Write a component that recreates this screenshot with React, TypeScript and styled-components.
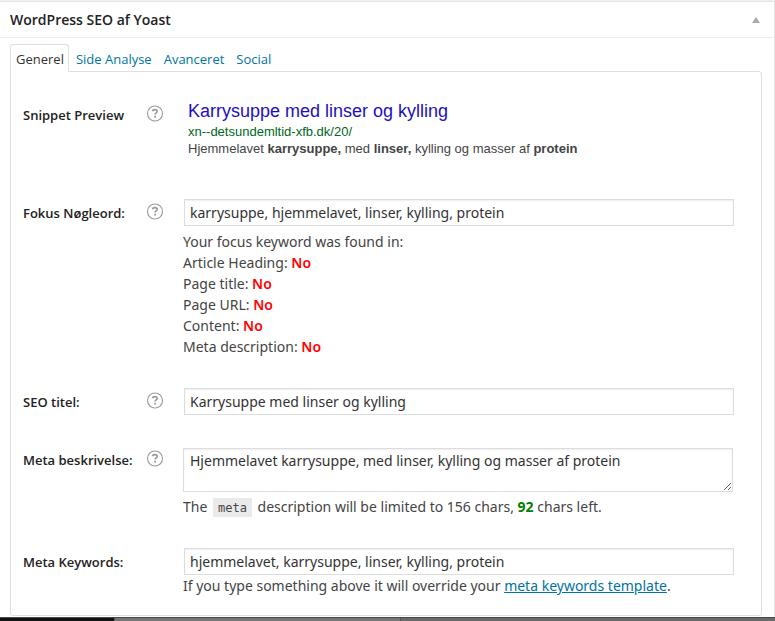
import React from "react";
import styled, { createGlobalStyle } from "styled-components";

const GlobalStyle = createGlobalStyle`
  *, *::before, *::after { box-sizing: border-box; }
  body {
    margin: 0;
    background: #f1f1f1;
    color: #444;
    font: 14px/21px "Noto Sans", "Open Sans", sans-serif;
  }
`;

const Page = styled.div`
  padding-top: 1px;
`;

const Postbox = styled.section`
  background: #fff;
  border-top: 1px solid #e5e5e5;
  border-right: 1px solid #e5e5e5;
`;

const BoxHeader = styled.header`
  display: flex;
  align-items: center;
  justify-content: space-between;
  height: 36px;
  padding: 0 14px 0 10px;
  border-bottom: 1px solid #eee;
`;

const BoxTitle = styled.h3`
  margin: 0;
  font-family: "Open Sans", sans-serif;
  font-size: 14px;
  font-weight: 600;
  line-height: 20px;
  color: #222;
`;

const Toggle = styled.button`
  display: flex;
  padding: 0;
  border: 0;
  background: none;
  color: #aaa;
`;

const Inside = styled.div`
  padding: 6px 12px 1px 10px;
`;

const Tabs = styled.nav`
  display: flex;
  margin-bottom: -1px;
`;

const Tab = styled.a<{ $active?: boolean }>`
  height: 28px;
  margin-right: ${(p) => (p.$active ? 2 : 2)}px;
  padding: ${(p) => (p.$active ? "5px 4px 0 5px" : "6px 5px 0")};
  border: ${(p) => (p.$active ? "1px solid #dfdfdf" : "0")};
  border-bottom: 0;
  border-radius: 3px 3px 0 0;
  background: ${(p) => (p.$active ? "#fff" : "transparent")};
  color: ${(p) => (p.$active ? "#333" : "#0074a2")};
  font-family: "Open Sans", sans-serif;
  font-size: 13px;
  line-height: 19px;
  text-decoration: none;
  z-index: 1;
`;

const Panel = styled.div`
  display: flex;
  flex-direction: column;
  gap: 30px;
  padding: 28px 27px 19px 12px;
  border: 1px solid #dfdfdf;
  border-radius: 0 3px 3px 3px;
`;

const Row = styled.div`
  display: grid;
  grid-template-columns: 123px 37px minmax(0, 1fr);
`;

const Label = styled.label`
  padding-top: 5px;
  color: #222;
  font-family: "Open Sans", sans-serif;
  font-size: 13px;
  font-weight: 600;
  line-height: 20px;
`;

const HelpButton = styled.button`
  display: flex;
  align-self: start;
  margin-top: 5px;
  padding: 0;
  border: 0;
  background: none;
  color: #999;
`;

const Input = styled.input`
  display: block;
  width: calc(100% - 1px);
  height: 27px;
  margin: 1px 0 0 1px;
  padding: 2px 5px;
  border: 1px solid #ddd;
  box-shadow: inset 0 1px 2px rgba(0, 0, 0, 0.07);
  background: #fff;
  color: #333;
  font: inherit;
`;

const TextArea = styled.textarea`
  display: block;
  width: calc(100% - 1px);
  height: 44px;
  margin: 3px 0 4px;
  padding: 1px 6px;
  border: 1px solid #ddd;
  box-shadow: inset 0 1px 2px rgba(0, 0, 0, 0.07);
  background: #fff;
  color: #333;
  font: inherit;
  resize: vertical;
`;

const Results = styled.div`
  margin-top: 5px;
`;

const Note = styled.p`
  margin: 0;
`;

const Status = styled.strong<{ $good?: boolean }>`
  color: ${(p) => (p.$good ? "green" : "red")};
  font-weight: ${(p) => (p.$good ? 700 : 600)};
`;

const Code = styled.code`
  margin: 0 2px;
  padding: 3px 5px 2px;
  background: #eaeaea;
  font: 12px "DejaVu Sans Mono", monospace;
`;

const Link = styled.a`
  color: #0074a2;
`;

const Snippet = styled.div`
  min-height: 68px;
  padding-left: 5px;
  font: 13px/17px "Liberation Sans", Arial, sans-serif;
`;

const SnippetTitle = styled.a`
  display: block;
  color: #1e0fbe;
  font-size: 18px;
  line-height: 23px;
  text-decoration: none;
`;

const SnippetUrl = styled.div`
  color: #006621;
`;

const Footer = styled.footer`
  display: grid;
  grid-template-columns: 115px 286px 1fr;
  height: 4px;
  border-top: 1px solid #4a4848;
`;

const Strip = styled.div<{ $tone: string }>`
  background: ${(p) => p.$tone};
  border-right: 1px solid #555;

  &:last-child {
    border-right: 0;
  }
`;

function Help() {
  return (
    <HelpButton type="button" aria-label="Help">
      <svg width="18" height="17" viewBox="0 0 18 17" fill="none" stroke="currentColor">
        <circle cx="9" cy="8.5" r="7.5" strokeWidth="1.1" />
        <path d="M6.7 6.3C6.8 5.1 7.7 4.6 8.9 4.6c1.4 0 2.3.7 2.3 1.8 0 1.5-2.1 1.5-2.1 3.2" strokeWidth="1.6" />
        <path d="M8.2 11.6h1.8" strokeWidth="1.7" />
      </svg>
    </HelpButton>
  );
}

const checks = ["Article Heading", "Page title", "Page URL", "Content", "Meta description"];

export default function App() {
  return (
    <>
      <GlobalStyle />
      <Page>
        <Postbox>
          <BoxHeader>
            <BoxTitle>WordPress SEO af Yoast</BoxTitle>
            <Toggle type="button" aria-label="Toggle panel">
              <svg width="8" height="6" viewBox="0 0 8 6" fill="currentColor">
                <path d="M4 0L8 6H0Z" />
              </svg>
            </Toggle>
          </BoxHeader>
          <Inside>
            <Tabs>
              <Tab href="#general" $active>Generel</Tab>
              <Tab href="#analysis">Side Analyse</Tab>
              <Tab href="#advanced">Avanceret</Tab>
              <Tab href="#social">Social</Tab>
            </Tabs>
            <Panel>
              <Row>
                <Label as="div">Snippet Preview</Label>
                <Help />
                <Snippet>
                  <SnippetTitle href="#preview">Karrysuppe med linser og kylling</SnippetTitle>
                  <SnippetUrl>xn--detsundemltid-xfb.dk/20/</SnippetUrl>
                  <div>
                    Hjemmelavet <b>karrysuppe,</b> med <b>linser,</b> kylling og masser af <b>protein</b>
                  </div>
                </Snippet>
              </Row>
              <Row>
                <Label htmlFor="focus">Fokus Nøgleord:</Label>
                <Help />
                <div>
                  <Input id="focus" defaultValue="karrysuppe, hjemmelavet, linser, kylling, protein" />
                  <Results>
                    <Note>Your focus keyword was found in:</Note>
                    {checks.map((name) => (
                      <Note key={name}>
                        {name}: <Status>No</Status>
                      </Note>
                    ))}
                  </Results>
                </div>
              </Row>
              <Row>
                <Label htmlFor="title">SEO titel:</Label>
                <Help />
                <Input id="title" defaultValue="Karrysuppe med linser og kylling" />
              </Row>
              <Row>
                <Label htmlFor="description">Meta beskrivelse:</Label>
                <Help />
                <div>
                  <TextArea
                    id="description"
                    defaultValue="Hjemmelavet karrysuppe, med linser, kylling og masser af protein"
                  />
                  <Note>
                    The <Code>meta</Code> description will be limited to 156 chars, <Status $good>92</Status> chars left.
                  </Note>
                </div>
              </Row>
              <Row>
                <Label htmlFor="keywords">Meta Keywords:</Label>
                <span />
                <div>
                  <Input id="keywords" defaultValue="hjemmelavet, karrysuppe, linser, kylling, protein" />
                  <Note>
                    If you type something above it will override your <Link href="#template">meta keywords template</Link>.
                  </Note>
                </div>
              </Row>
            </Panel>
          </Inside>
        </Postbox>
        <Footer>
          <Strip $tone="#111114" />
          <Strip $tone="#777574" />
          <Strip $tone="#6a6868" />
        </Footer>
      </Page>
    </>
  );
}
